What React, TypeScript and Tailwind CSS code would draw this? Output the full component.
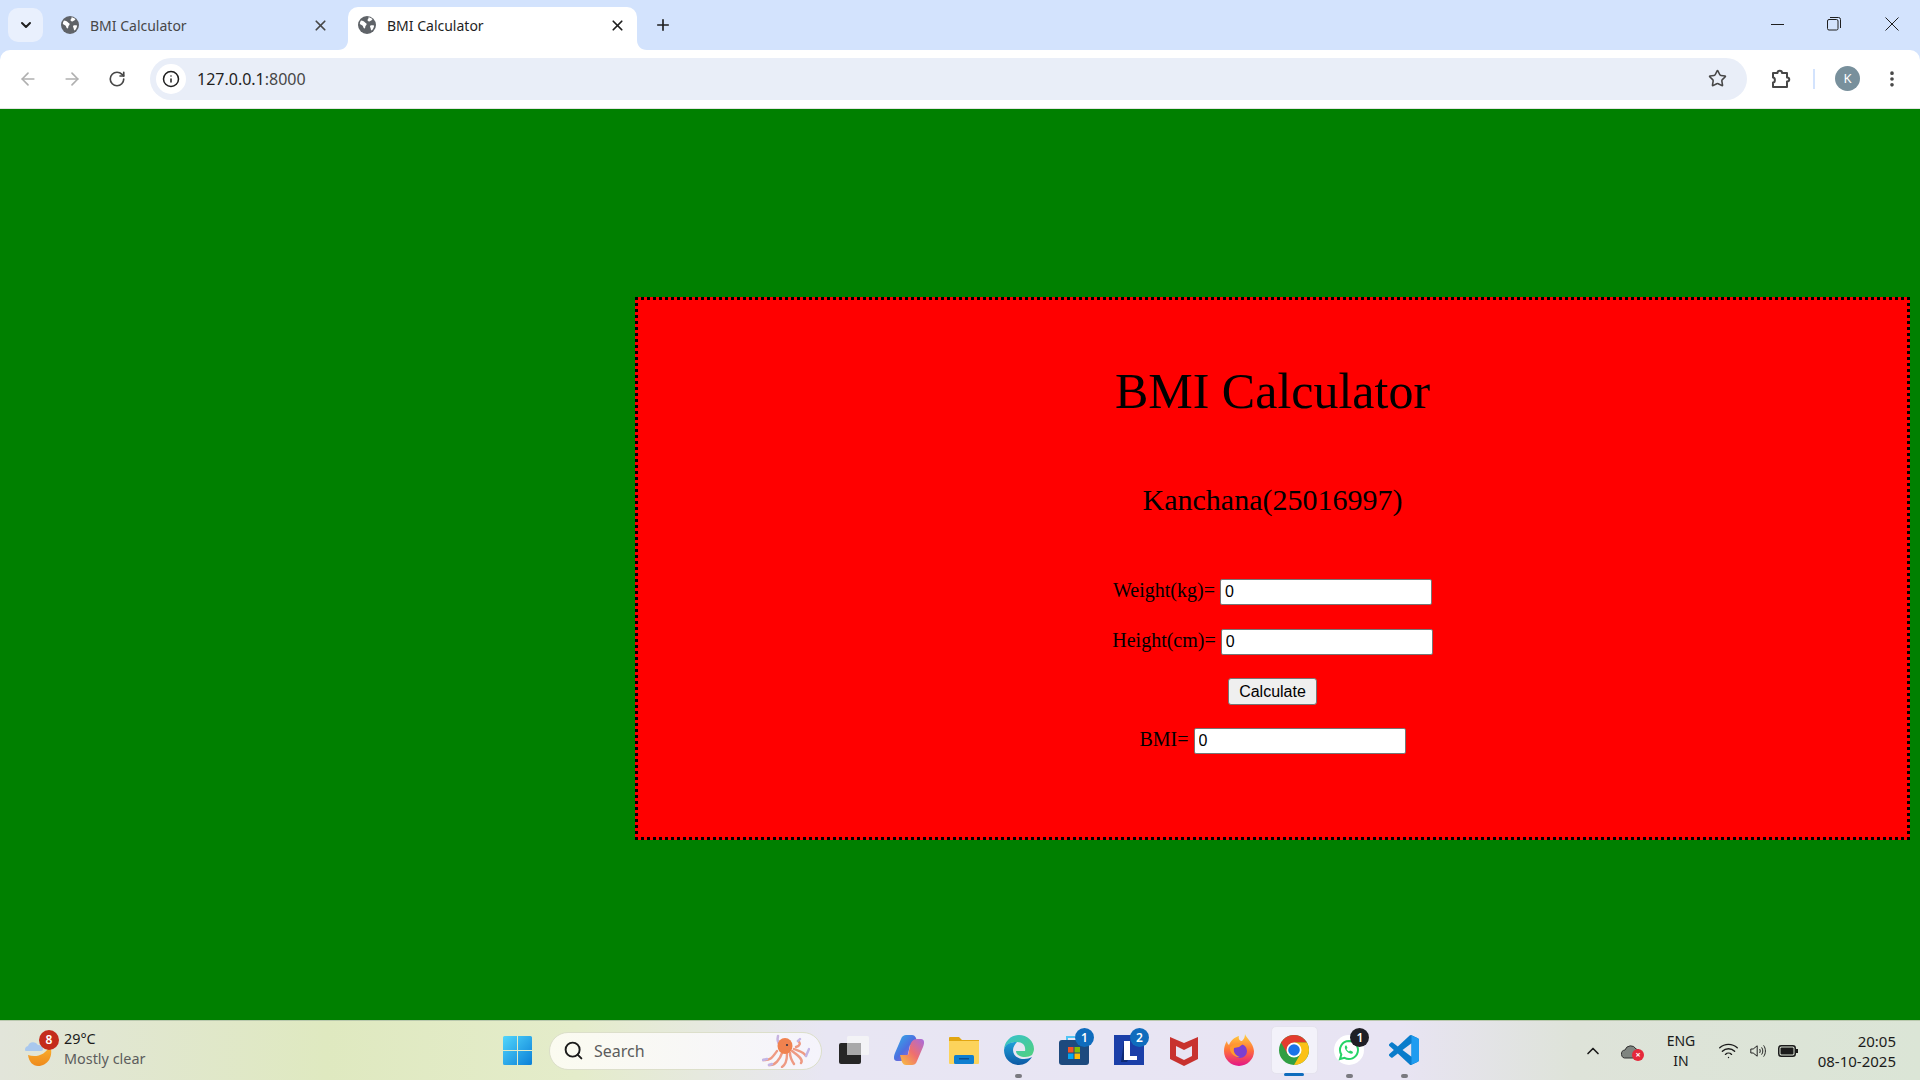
import { ReactNode } from "react";
import { ArrowLeft, ArrowRight, ChevronDown, ChevronUp, Info, MoreVertical, Plus, RotateCw, Search, Star, Wifi, X } from "lucide-react";

const uiFont = "font-['Noto_Sans','Open_Sans',sans-serif]";

const Globe = () => (
  <svg width="18" height="18" viewBox="0 0 18 18">
    <circle cx="9" cy="9" r="9" fill="#5f6368" />
    <path d="M3 4.5c1.5.2 3 .6 3.6 1.6.5 1 1.8.8 2 1.9.1 1-.9 1.4-1.2 2.3-.2 1-.1 2-1 2.2-1.2-.4-1-2-2-3-.8-.7-1.8-1-2.6-1.6C1.9 6.600 2.300 5.400 3 4.500z" fill="#fff" />
    <path d="M10.500 1.200c1.500.2 3 1 4 2l-1.200 1.400c-1 .2-1.300 1.200-2.300.8-.7-.4-1.500-.5-1.500-1.400.3-1 1.400-1.600 1-2.800zM12.500 9.500c1.100-.3 2.300-.2 3.600.1-.2 2.100-1 3.700-2.400 5-1.100-.5-.8-1.800-1.200-2.800-.4-.8-.8-1.600 0-2.300z" fill="#fff" />
  </svg>
);

const Tab = ({ active }: { active?: boolean }) => (
  <div className={active
    ? "relative flex items-center w-[289px] h-[43px] pb-[7px] pl-[10px] bg-white rounded-t-[10px]"
    : "flex items-center w-[300px] h-[43px] pb-[7px] pl-[13px]"}>
    {active && (
      <>
        <svg className="absolute -left-[10px] bottom-0" width="10" height="10" viewBox="0 0 10 10"><path d="M10 0v10H0C6 10 10 6 10 0z" fill="#fff" /></svg>
        <svg className="absolute -right-[10px] bottom-0" width="10" height="10" viewBox="0 0 10 10"><path d="M0 0v10h10C4 10 0 6 0 0z" fill="#fff" /></svg>
      </>
    )}
    <Globe />
    <span className={`ml-[11px] text-[14px] ${active ? "text-[#1f1f1f]" : "text-[#474747]"}`}>BMI Calculator</span>
    <X size={17} strokeWidth={2.4} className={`ml-auto ${active ? "mr-[11px] text-[#1f1f1f]" : "mr-[19px] text-[#474747]"}`} />
  </div>
);

const TitleBar = () => (
  <div className={`flex items-end h-[50px] bg-[#d3e3fd] ${uiFont}`}>
    <div className="self-start flex items-center justify-center ml-2 mt-2 w-[35px] h-[34px] rounded-[10px] bg-[#e9f0fd]">
      <ChevronDown size={16} strokeWidth={3} className="text-[#1f1f1f]" />
    </div>
    <div className="ml-[5px] flex items-end">
      <Tab />
      <Tab active />
    </div>
    <div className="self-center ml-[17px] mb-[1px]">
      <Plus size={18} strokeWidth={2.2} className="text-[#1f1f1f]" />
    </div>
    <div className="ml-auto self-start flex items-center h-[48px] pr-[21px] text-[#1f1f1f]">
      <div className="w-[13px] h-px bg-[#1f1f1f] mr-[43px]" />
      <svg width="14" height="14" viewBox="0 0 14 14" fill="none" stroke="#1f1f1f" className="mr-[44px]">
        <rect x="0.500" y="2.500" width="10.500" height="10.500" rx="1.500" />
        <path d="M3 .5h8.500a2 2 0 0 1 2 2V11" />
      </svg>
      <svg width="14" height="14" viewBox="0 0 14 14" stroke="#1f1f1f"><path d="M.5.5l13 13M13.500.5l-13 13" /></svg>
    </div>
  </div>
);

const Toolbar = () => (
  <div className={`flex items-center h-[59px] pb-px bg-white rounded-t-[10px] border-b border-[#e3e3e3] ${uiFont}`}>
    <ArrowLeft size={20} className="ml-[18px] text-[#b0b0b0]" />
    <ArrowRight size={20} className="ml-[24px] text-[#b0b0b0]" />
    <RotateCw size={18} strokeWidth={2.2} className="ml-[26px] text-[#474747]" />
    <div className="flex items-center ml-[24px] w-[1597px] h-[42px] rounded-full bg-[#e9eef8] pl-[6px] pr-[20px]">
      <div className="flex items-center justify-center w-[30px] h-[30px] rounded-full bg-white">
        <Info size={18} strokeWidth={2} className="text-[#1f1f1f]" />
      </div>
      <span className="ml-[11px] text-[16px] text-[#1f1f1f]">127.0.0.1<span className="text-[#474747]">:8000</span></span>
      <Star size={19} strokeWidth={2} className="ml-auto text-[#474747]" />
    </div>
    <svg width="22" height="22" viewBox="0 0 22 22" fill="none" stroke="#474747" strokeWidth="2" className="ml-[23px]">
      <path d="M3 5h4.500c0-3 4.500-3 4.500 0H17v4.500c3 0 3 4 0 4V19H3v-4.500c2.500 0 2.500-5 0-5z" strokeLinejoin="round" />
    </svg>
    <div className="ml-[21px] w-[2px] h-[20px] bg-[#d3e3fd]" />
    <div className="ml-[20px] flex items-center justify-center w-[25px] h-[25px] rounded-full bg-[#78909c] text-[13px] text-white">K</div>
    <MoreVertical size={20} strokeWidth={2.4} className="ml-[22px] text-[#474747]" />
  </div>
);

const Field = ({ label }: { label: string }) => (
  <div className="flex justify-center items-baseline gap-[5px] h-[26px]">
    <label className="text-[20px] leading-[23px] text-black">{label}</label>
    <input
      defaultValue="0"
      className="w-[212px] h-[26px] box-border border border-[#767676] rounded-[2px] bg-white px-1 text-[16px] text-black font-['Liberation_Sans',sans-serif] outline-none"
    />
  </div>
);

const BmiCard = () => (
  <div className="ml-[635px] mt-[188px] w-[1275px] h-[543px] border-[3px] border-dotted border-black bg-[#ff0000] font-['Liberation_Serif',serif] text-center pt-[64px]">
    <h1 className="text-[50px] leading-[55px] text-black">BMI Calculator</h1>
    <h2 className="mt-[65px] text-[30px] leading-[32px] text-black">Kanchana(25016997)</h2>
    <div className="mt-[63px] flex flex-col gap-[24px]">
      <Field label="Weight(kg)=" />
      <Field label="Height(cm)=" />
      <div className="flex justify-center h-[26px] -mt-px">
        <button className="w-[89px] h-[27px] border border-[#767676] rounded-[3px] bg-[#efefef] text-[16px] text-black font-['Liberation_Sans',sans-serif]">Calculate</button>
      </div>
      <Field label="BMI=" />
    </div>
  </div>
);

const Badge = ({ children, className }: { children: ReactNode; className: string }) => (
  <span className={`absolute flex items-center justify-center w-[19px] h-[19px] rounded-full text-[12px] font-semibold text-white ${className}`}>{children}</span>
);

const Cell = ({ children, active, running }: { children: ReactNode; active?: boolean; running?: boolean }) => (
  <div className="relative flex items-center justify-center w-[55.100px] h-[60px]">
    {active && <div className="absolute top-[6px] left-[4px] w-[47px] h-[48px] rounded-[5px] bg-[#f3f2fa] border border-[#e5e3ee]" />}
    <div className="relative flex items-center justify-center">{children}</div>
    {running && <div className="absolute bottom-[2px] w-[7px] h-[4px] rounded-full bg-[#7a7a80]" />}
    {active && <div className="absolute bottom-[4px] w-[20px] h-[3.500px] rounded-full bg-[#0f6cbd]" />}
  </div>
);

const Taskbar = () => (
  <div className={`flex items-center h-[60px] border-t border-[#b9c9ae] bg-[linear-gradient(90deg,#e2e5da_0%,#dfe9c0_17%,#e4ecca_30%,#e8e6f3_43%,#e8e4f3_73%,#dee3d9_82%,#dbe5d6_100%)] ${uiFont}`}>
    {/* weather */}
    <div className="flex items-center w-[503px] pl-[25px]">
      <div className="relative w-[30px] h-[30px]">
        <svg width="30" height="30" viewBox="0 0 30 30">
          <defs>
            <linearGradient id="m1" x1="0" y1="0" x2="0" y2="1"><stop offset="0" stopColor="#fbb32f" /><stop offset="1" stopColor="#ee8a1c" /></linearGradient>
          </defs>
          <path d="M3 19c8 3 18 0 22-10 4 11-2 21-12 21-5 0-9-4-10-11z" fill="url(#m1)" />
          <path d="M0 14a4 4 0 0 1 3-4 5.500 5.500 0 0 1 10-1c3 0 5 2 5 4 0 1-1 2-2 2H2c-1 0-2 0-2-1z" fill="#a9c8ee" />
        </svg>
        <Badge className="-top-[6px] left-[14px] !w-[20px] !h-[20px] bg-[#c42b1c]">8</Badge>
      </div>
      <div className="ml-[9px] text-[14.400px] leading-[20px] -mt-[3px]">
        <div className="text-[#1b1b1b]">29°C</div>
        <div className="text-[#5c5c5c]">Mostly clear</div>
      </div>
    </div>
    {/* start */}
    <svg width="29" height="29" viewBox="0 0 29 29">
      <defs>
        <linearGradient id="w1" x1="0" y1="0" x2="1" y2="1"><stop offset="0" stopColor="#52d6fc" /><stop offset="1" stopColor="#0b7fd7" /></linearGradient>
      </defs>
      <path d="M0 1.500A1.500 1.500 0 0 1 1.500 0H14v14H0zM15 0h12.500A1.500 1.500 0 0 1 29 1.500V14H15zM0 15h14v14H1.500A1.500 1.500 0 0 1 0 27.500zM15 15h14v12.500a1.500 1.500 0 0 1-1.500 1.500H15z" fill="url(#w1)" />
    </svg>
    {/* search */}
    <div className="relative flex items-center ml-[17px] w-[273px] h-[38px] rounded-full bg-gradient-to-r from-[#fbfbf0] to-[#f5f4fc] border border-[#dcdfca] pl-[13px]">
      <Search size={21} strokeWidth={2.2} className="text-[#1b1b1b]" />
      <span className="ml-[10px] text-[16px] text-[#5c5c5c]">Search</span>
      <svg width="48" height="34" viewBox="0 0 48 34" className="absolute right-[11px] top-[1px]" fill="none" strokeLinecap="round">
        <path d="M1 26c7 1 9-2 14-9M7 31c6 1 11-6 13-12M20 33c3-2 5-6 5-13M32 30c-2-3-4-7-4-11M39 29c3-4-4-8-9-12M44 22c-2-4-7-5-12-7M36 7c3 2 2 5-2 6" stroke="#ee9a83" strokeWidth="2.400" />
        <path d="M1 26l4-1M7 31l3-1M44 22l3-7M36 7l2-2" stroke="#c3b6e6" strokeWidth="2.400" />
        <path d="M16 2c-1 4 0 7 2 9" stroke="#c7b4e0" strokeWidth="2.500" />
        <ellipse cx="23" cy="12" rx="7.500" ry="8" fill="#f0824f" />
        <circle cx="25" cy="11" r="1.100" fill="#334" />
      </svg>
    </div>
    {/* pinned apps */}
    <div className="flex ml-[4px] -mt-[1px]">
      <Cell>
        <svg width="30" height="30" viewBox="0 0 30 30">
          <rect x="0" y="8" width="22" height="21" rx="2" fill="#262626" />
          <rect x="8" y="1" width="22" height="19" rx="1.500" fill="#f3f3f6" />
          <rect x="8" y="8" width="14" height="12" fill="#a9a9aa" />
        </svg>
      </Cell>
      <Cell>
        <svg width="30" height="32" viewBox="0 0 30 32">
          <defs>
            <linearGradient id="c1" x1="0" y1="0" x2="1" y2="1"><stop offset="0" stopColor="#2fb5e8" /><stop offset="0.5" stopColor="#4d6fe0" /><stop offset="1" stopColor="#d660c8" /></linearGradient>
            <linearGradient id="c2" x1="0" y1="1" x2="1" y2="0"><stop offset="0" stopColor="#f9c23c" /><stop offset="0.5" stopColor="#ef6f6f" /><stop offset="1" stopColor="#a66be0" /></linearGradient>
          </defs>
          <path d="M12 1h6c2 0 3 1 4 3l2 7h-8l-2 9c-1 4-3 7-7 7H3C0 27-1 24 1 19L7 5c1-3 3-4 5-4z" fill="url(#c1)" />
          <path d="M18 31h-6c-2 0-3-1-4-3l-2-7h8l2-9c1-4 3-7 7-7h4c3 0 4 3 2 8l-6 14c-1 3-3 4-5 4z" fill="url(#c2)" />
        </svg>
      </Cell>
      <Cell>
        <svg width="30" height="30" viewBox="0 0 30 30">
          <path d="M0 3a1 1 0 0 1 1-1h9l3 3h17v4H0z" fill="#e2a611" />
          <path d="M0 6h30v22a1 1 0 0 1-1 1H1a1 1 0 0 1-1-1z" fill="#fcd35b" />
          <rect x="5" y="20" width="20" height="9" rx="1.500" fill="#0f7fd0" />
          <rect x="10" y="23" width="10" height="1.500" fill="#0b4f8f" />
        </svg>
      </Cell>
      <Cell running>
        <svg width="30" height="30" viewBox="0 0 30 30">
          <defs>
            <linearGradient id="e1" x1="0" y1="0" x2="1" y2="1"><stop offset="0" stopColor="#35c1d0" /><stop offset="1" stopColor="#52d17c" /></linearGradient>
            <linearGradient id="e2" x1="0" y1="0" x2="0" y2="1"><stop offset="0" stopColor="#1fa0d8" /><stop offset="1" stopColor="#0c59a4" /></linearGradient>
          </defs>
          <path d="M15 0a15 15 0 0 0-15 15C1 9 7 7 13 7c6 0 9 4 8 9h-9c0 4 5 6 9 6 3 0 5-1 7-2 1-2 2-4 2-6C30 6 23 0 15 0z" fill="url(#e1)" />
          <path d="M0 15c0 9 7 15 15 15 5 0 10-3 13-8-7 4-19 2-19-7 0-3 2-6 4-8C6 7 1 9 0 15z" fill="url(#e2)" />
        </svg>
      </Cell>
      <Cell>
        <svg width="30" height="30" viewBox="0 0 30 30">
          <path d="M8 5V2h8" fill="none" stroke="#52c4f5" strokeWidth="2" />
          <rect y="5" width="30" height="25" rx="3" fill="#1d4a7e" />
          <rect x="9" y="12" width="5.500" height="5.500" fill="#f35325" />
          <rect x="15.500" y="12" width="5.500" height="5.500" fill="#81bc06" />
          <rect x="9" y="18.500" width="5.500" height="5.500" fill="#05a6f0" />
          <rect x="15.500" y="18.500" width="5.500" height="5.500" fill="#ffba08" />
        </svg>
        <Badge className="-top-[7px] left-[16px] bg-[#0f6cbd]">1</Badge>
      </Cell>
      <Cell>
        <svg width="30" height="30" viewBox="0 0 30 30">
          <rect width="30" height="30" fill="#1b3fa8" />
          <path d="M10 6l-3 21h6l3-6z" fill="#0d2a75" />
          <path d="M10 6h6v15h7v4H10z" fill="#fff" />
        </svg>
        <Badge className="-top-[7px] left-[16px] bg-[#0f6cbd]">2</Badge>
      </Cell>
      <Cell>
        <svg width="28" height="32" viewBox="0 0 28 32">
          <path d="M0 3l14 6 14-6v22l-14 7-14-7z" fill="#c8322e" />
          <path d="M6 12l8 4 8-4v10l-8 4-8-4z" fill="#e8e4f3" />
        </svg>
      </Cell>
      <Cell>
        <svg width="30" height="34" viewBox="0 0 30 34">
          <defs>
            <linearGradient id="f1" x1="0.500" y1="0" x2="0.500" y2="1"><stop offset="0" stopColor="#ffd43b" /><stop offset="0.500" stopColor="#ff7139" /><stop offset="1" stopColor="#e31587" /></linearGradient>
          </defs>
          <path d="M21 1c1 4 8 8 9 17a15 15 0 0 1-30 0c0-4 1-7 3-10 0 2 1 3 2 4 2-5 6-8 10-9-1 3 1 5 3 5 2-2 3-4 3-7z" fill="url(#f1)" />
          <circle cx="16" cy="18" r="7" fill="#7b3fd0" />
          <path d="M6 14c3-3 9-5 13-3l-4 3-5 1c-1 3 1 8 6 9-5 1-11-4-10-10z" fill="#ff9a2e" />
        </svg>
      </Cell>
      <Cell active>
        <svg width="30" height="30" viewBox="0 0 30 30">
          <circle cx="15" cy="15" r="15" fill="#319f43" />
          <path d="M2.010 7.500A15 15 0 0 1 27.990 7.500H15L8.500 18.750z" fill="#e33b2e" />
          <path d="M27.990 7.500A15 15 0 0 1 15 30L21.500 18.750 15 7.500z" fill="#fbc116" />
          <circle cx="15" cy="15" r="7.500" fill="#fff" />
          <circle cx="15" cy="15" r="5.800" fill="#1a73e8" />
        </svg>
      </Cell>
      <Cell running>
        <svg width="30" height="30" viewBox="0 0 30 30">
          <circle cx="15" cy="15" r="15" fill="#fff" />
          <path d="M15 6a9 9 0 0 0-7.700 13.600L6 24l4.500-1.200A9 9 0 1 0 15 6z" fill="none" stroke="#25d366" strokeWidth="2" />
          <path d="M11.500 10.500c-1.500 1.500-.5 4 1.500 6s4.500 3 6 1.500l-.5-1.500-2.500-1-1 1c-1-.5-2-1.500-2.500-2.500l1-1-1-2.500z" fill="#25d366" />
        </svg>
        <Badge className="-top-[7px] left-[16px] bg-[#1f1f26]">1</Badge>
      </Cell>
      <Cell running>
        <svg width="30" height="30" viewBox="0 0 100 100">
          <path fillRule="evenodd" d="M96.460 10.800L75.860.870a6.230 6.230 0 0 0-7.100 1.200L29.350 38.040 12.190 25.010a4.160 4.160 0 0 0-5.320.240L1.360 30.260a4.170 4.170 0 0 0 0 6.160L16.240 50 1.360 63.580a4.170 4.170 0 0 0 0 6.160l5.500 5a4.160 4.160 0 0 0 5.320.240L29.350 61.960l39.410 35.970a6.220 6.220 0 0 0 7.100 1.200l20.600-9.910A6.250 6.250 0 0 0 100 83.600V16.400a6.250 6.250 0 0 0-3.540-5.600zM75 72.700L45.100 50 75 27.300z" fill="#0a7ccb" />
          <path d="M71 .500l25.460 10.300A6.250 6.250 0 0 1 100 16.400V83.600a6.250 6.250 0 0 1-3.540 5.600L71 99.500a6 6 0 0 0 4-6V6.500a6 6 0 0 0-4-6z" fill="#1f9cf0" />
        </svg>
      </Cell>
    </div>
    {/* tray */}
    <div className="ml-auto flex items-center pr-[24px] text-[#1b1b1b]">
      <div className="flex justify-center w-[30px]"><ChevronUp size={20} strokeWidth={2} /></div>
      <div className="relative flex justify-center w-[48px]">
        <svg width="22" height="16" viewBox="0 0 22 16" fill="#7f8580" stroke="#333"><path d="M5 15a4 4 0 0 1-1-8 6 6 0 0 1 11-1 4 4 0 0 1 4 4v5z" /></svg>
        <span className="absolute top-[6px] left-[24px] flex items-center justify-center w-[12px] h-[12px] rounded-full bg-[#e5293b] text-[9px] leading-none text-white font-bold">×</span>
      </div>
      <div className="w-[50px] text-center text-[14px] leading-[20px]">
        <div>ENG</div>
        <div>IN</div>
      </div>
      <div className="flex justify-center w-[44px]"><Wifi size={21} strokeWidth={1.600} /></div>
      <div className="flex justify-center w-[16px]">
        <svg width="20" height="18" viewBox="0 0 20 18" fill="none" stroke="#1b1b1b" strokeWidth="1.200">
          <path d="M1 6.500v5h3l5 4V2.500l-5 4zM12 6.500c1 1.500 1 3.500 0 5M14.500 4.500c2 2.700 2 6.300 0 9M17 2c3 4 3 10 0 14" strokeLinejoin="round" />
        </svg>
      </div>
      <div className="flex justify-center w-[44px]">
        <svg width="20" height="12" viewBox="0 0 20 12"><rect x="0.750" y="0.750" width="16.500" height="10.500" rx="2.500" fill="none" stroke="#1b1b1b" strokeWidth="1.500" /><rect x="2.500" y="2.500" width="13" height="7" rx="1" fill="#1b1b1b" /><rect x="18" y="4" width="2" height="4" fill="#1b1b1b" /></svg>
      </div>
      <div className="w-[86px] text-right text-[15px] leading-[20px] whitespace-nowrap">
        <div>20:05</div>
        <div>08-10-2025</div>
      </div>
    </div>
  </div>
);

const App = () => {
  return (
    <div className="flex flex-col h-screen overflow-hidden bg-[#008000]">
      <div className="bg-[#d3e3fd]">
        <TitleBar />
        <Toolbar />
      </div>
      <main className="flex-1 min-h-0">
        <BmiCard />
      </main>
      <Taskbar />
    </div>
  );
};

export default App;
